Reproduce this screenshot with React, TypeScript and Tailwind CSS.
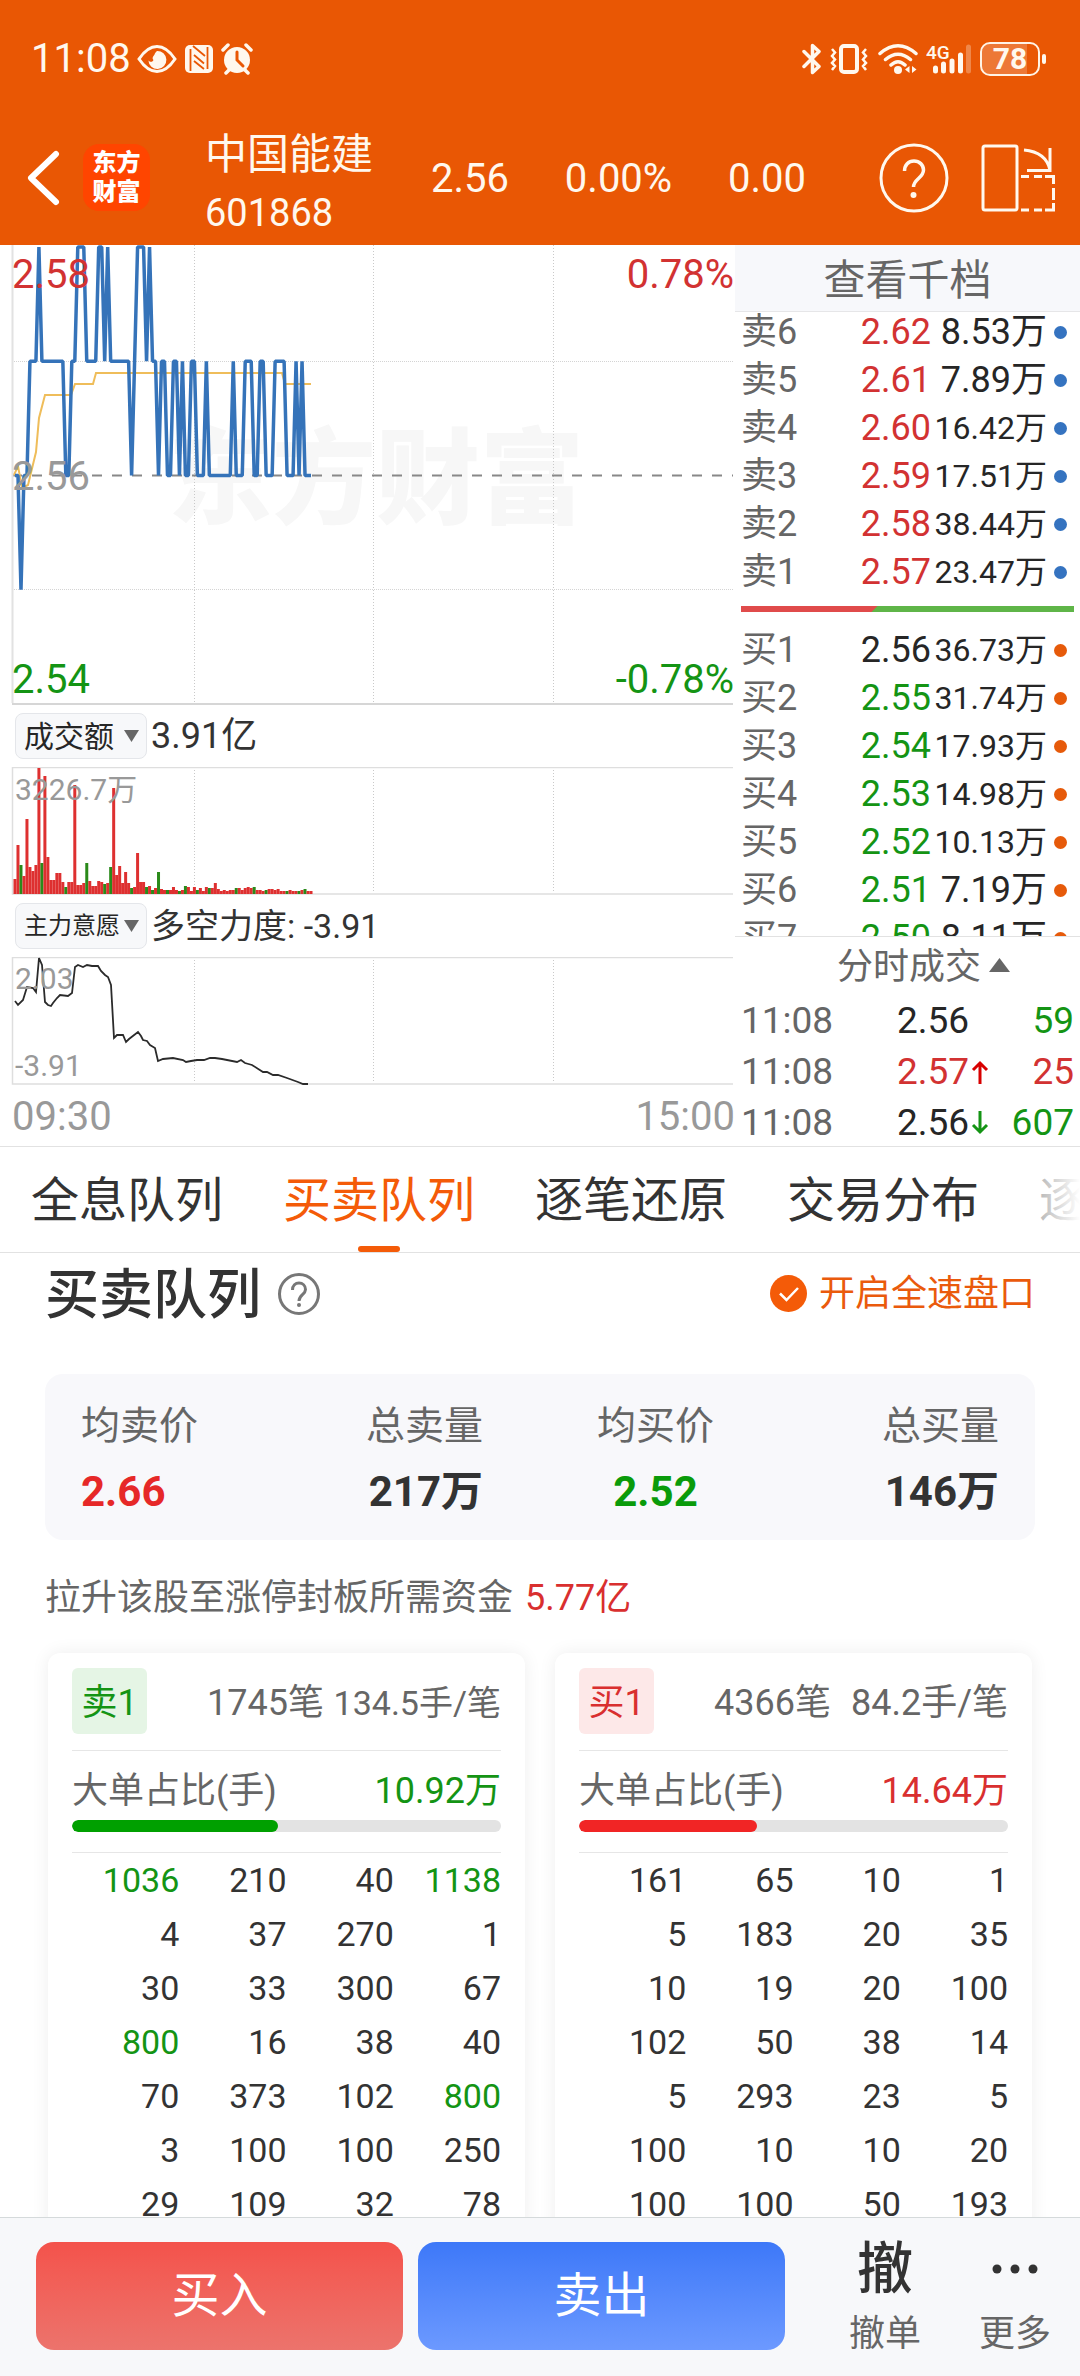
import React from "react";
import clsx from "clsx";

type Tone = "up" | "down" | "flat";

const toneClass: Record<Tone, string> = {
  up: "text-[#d23232]",
  down: "text-[#149414]",
  flat: "text-[#262626]",
};

interface Level {
  label: string;
  price: string;
  volume: string;
  tone: Tone;
}

const SELLS: Level[] = [
  { label: "卖6", price: "2.62", volume: "8.53万", tone: "up" },
  { label: "卖5", price: "2.61", volume: "7.89万", tone: "up" },
  { label: "卖4", price: "2.60", volume: "16.42万", tone: "up" },
  { label: "卖3", price: "2.59", volume: "17.51万", tone: "up" },
  { label: "卖2", price: "2.58", volume: "38.44万", tone: "up" },
  { label: "卖1", price: "2.57", volume: "23.47万", tone: "up" },
];

const BUYS: Level[] = [
  { label: "买1", price: "2.56", volume: "36.73万", tone: "flat" },
  { label: "买2", price: "2.55", volume: "31.74万", tone: "down" },
  { label: "买3", price: "2.54", volume: "17.93万", tone: "down" },
  { label: "买4", price: "2.53", volume: "14.98万", tone: "down" },
  { label: "买5", price: "2.52", volume: "10.13万", tone: "down" },
  { label: "买6", price: "2.51", volume: "7.19万", tone: "down" },
  { label: "买7", price: "2.50", volume: "8.11万", tone: "down" },
];

const TRADES: { time: string; price: string; tone: Tone; dir?: "up" | "down"; qty: string; qtyTone: Tone }[] = [
  { time: "11:08", price: "2.56", tone: "flat", qty: "59", qtyTone: "down" },
  { time: "11:08", price: "2.57", tone: "up", dir: "up", qty: "25", qtyTone: "up" },
  { time: "11:08", price: "2.56", tone: "flat", dir: "down", qty: "607", qtyTone: "down" },
];

// [price, number of minutes it held]
const PRICE_RUNS: [number, number][] = [
  [2.56, 2], [2.55, 1], [2.56, 2], [2.57, 3], [2.58, 1], [2.57, 8], [2.56, 2], [2.57, 2],
  [2.58, 3], [2.57, 4], [2.58, 2], [2.57, 1], [2.58, 1], [2.57, 7], [2.56, 1], [2.57, 1],
  [2.58, 3], [2.57, 1], [2.58, 1], [2.57, 2], [2.56, 1], [2.57, 2], [2.56, 2], [2.57, 2],
  [2.56, 1], [2.57, 1], [2.56, 2], [2.57, 2], [2.56, 3], [2.57, 1], [2.56, 8], [2.57, 1],
  [2.56, 3], [2.57, 3], [2.56, 2], [2.57, 2], [2.56, 3], [2.57, 4], [2.56, 3], [2.57, 1],
  [2.56, 1], [2.57, 1], [2.56, 3],
];

const AVERAGE =
  "14,230 18,221 22,243 28,240 36,207 39,173 45,150 71,150 75,139 93,139 96,128 282,128 285,139 311,139";

// Turnover per minute, negative when the minute closed lower
const TURNOVER = [
  15, 49, -29, 18, 75, 27, 23, 29, 126, -31, 118, 37, 14, 14, 21, 21, 12, -7, 12, 12,
  109, 9, 9, 11, -31, 13, 8, 8, 13, 12, -10, 11, -27, 106, 19, 28, 11, 22, 11, -6,
  7, 41, 12, 12, -7, 8, -4, 6, -22, 5, 4, -4, 4, 7, 4, -3, 4, -8, 7, 3,
  7, -4, 6, 3, 7, -6, 6, 11, 5, 3, 4, 3, 4, 4, -6, 6, 4, 6, 7, 6,
  -7, 4, 4, 3, -4, 5, 5, 4, 5, 3, 3, -3, 4, 3, 3, -3, 4, -5, 3, 3,
];

const FORCE =
  "15,44 18,48 23,43 27,30 33,31 36,35 39,1 42,8 45,45 48,48 51,49 53,46 57,41 60,38 68,39 72,36 75,10 78,8 83,10 87,8 92,9 98,9 101,14 105,18 108,20 111,28 114,81 117,78 123,78 126,85 129,82 138,75 141,79 143,83 147,84 150,88 155,91 158,104 163,102 173,101 183,103 186,105 191,104 197,103 204,103 210,101 215,101 222,102 237,105 241,103 245,106 252,108 263,115 267,115 273,118 278,118 287,121 298,125 303,127 308,127";

const TABS = ["全息队列", "买卖队列", "逐笔还原", "交易分布", "逐"];

interface Queue {
  badge: string;
  side: "sell" | "buy";
  count: string;
  average: string;
  averageClass: string;
  big: string;
  ratio: number;
  rows: number[][];
}

const QUEUES: Queue[] = [
  {
    badge: "卖1",
    side: "sell",
    count: "1745笔",
    average: "134.5手/笔",
    averageClass: "text-[34px]",
    big: "10.92万",
    ratio: 48,
    rows: [
      [1036, 210, 40, 1138],
      [4, 37, 270, 1],
      [30, 33, 300, 67],
      [800, 16, 38, 40],
      [70, 373, 102, 800],
      [3, 100, 100, 250],
      [29, 109, 32, 78],
    ],
  },
  {
    badge: "买1",
    side: "buy",
    count: "4366笔",
    average: "84.2手/笔",
    averageClass: "text-[36px]",
    big: "14.64万",
    ratio: 41.5,
    rows: [
      [161, 65, 10, 1],
      [5, 183, 20, 35],
      [10, 19, 20, 100],
      [102, 50, 38, 14],
      [5, 293, 23, 5],
      [100, 10, 10, 20],
      [100, 100, 50, 193],
    ],
  },
];

const minuteX = (i: number) => 15 + i * 2.99;

const StatusBar: React.FC = () => (
  <div className="flex h-[110px] items-center justify-between pl-[31px] pr-[34px] pt-2">
    <div className="flex items-center">
      <span className="text-[40px] leading-none">11:08</span>
      <svg className="ml-1.5 h-[30px] w-10" viewBox="0 0 40 30" fill="none">
        <path d="M2 15C8 6 14 2.500 20 2.500S32 6 38 15C32 24 26 27.500 20 27.500S8 24 2 15Z" stroke="currentColor" strokeWidth="3" />
        <path d="M20 7a9 9 0 1 1-8.600 9.500c1.800 2.200 4.600 1.500 5-.5-2.200-2.600 1.200-4.500 1.500-6.500Q19 7.500 20 7Z" fill="currentColor" />
      </svg>
      <svg className="ml-2 h-[30px] w-7" viewBox="0 0 28 30">
        <rect x="0" y="1" width="28" height="28" rx="5" fill="currentColor" />
        <path d="M5.500 5v22M22.500 3v22M8 2l12 10M9 11l10 8.500M9 17l10 8" stroke="#e95704" strokeWidth="1.800" fill="none" />
      </svg>
      <svg className="ml-2 h-8 w-8" viewBox="0 0 32 32" fill="none" stroke="currentColor" strokeLinecap="round">
        <circle cx="16" cy="17" r="13" fill="currentColor" stroke="none" />
        <path d="M2 7l5-5M30 7l-5-5M5 30l4-4M27 30l-4-4" strokeWidth="3.500" />
        <path d="M16 9v8l6 6" stroke="#e95704" strokeWidth="3" />
      </svg>
    </div>
    <div className="flex items-center">
      <svg className="h-8 w-5" viewBox="0 0 20 32" fill="none" stroke="currentColor" strokeWidth="3.500" strokeLinejoin="round" strokeLinecap="round">
        <path d="M2 8.500L17 23.500L10.500 29.500V2.500L17 8.500L2 23.500" />
      </svg>
      <svg className="ml-2 h-8 w-[38px]" viewBox="0 0 38 32" fill="none" stroke="currentColor">
        <rect x="11" y="3" width="16" height="26" rx="3" strokeWidth="4" />
        <path d="M2 6l3 3.500-3 3.500 3 3.500-3 3.500 3 3-3 4M36 6l-3 3.500 3 3.500-3 3.500 3 3.500-3 3 3 4" strokeWidth="2.500" />
      </svg>
      <svg className="ml-2.5 h-8 w-10" viewBox="0 0 40 32" fill="none" stroke="currentColor" strokeWidth="3.500" strokeLinecap="round">
        <path d="M2 10.500Q20-5 38 10.500M7.500 16.500Q20 6 32.500 16.500M13 22Q20 15.500 27 22" />
        <circle cx="20" cy="27" r="4" fill="currentColor" stroke="none" />
        <path d="M31.500 23v7l-4.500-3.500zM34 23v7l4.500-3.500z" fill="currentColor" stroke="none" />
      </svg>
      <svg className="ml-2 h-8 w-[46px]" viewBox="0 0 46 32">
        <text x="0" y="16" fontSize="19" fontWeight="500" fill="currentColor">4G</text>
        <g stroke="currentColor" strokeWidth="5" strokeLinecap="round">
          <path d="M9.500 28V25M17.500 28V21M26 28V18M34.500 28V12" />
          <path d="M42.500 28V4" strokeOpacity="0.300" />
        </g>
      </svg>
      <div className="relative ml-2 flex h-[34px] w-[60px] items-center justify-center overflow-hidden rounded-[10px] border-2 border-[#fff3e6]">
        <span className="absolute inset-y-0 left-0 w-4/5 bg-white/20" />
        <span className="relative text-[30px] font-bold leading-none">78</span>
      </div>
      <span className="ml-0.5 h-2.5 w-1 rounded-full bg-current" />
    </div>
  </div>
);

const NavBar: React.FC = () => (
  <div className="flex h-[135px] items-center pl-[26px] pr-6">
    <button type="button" aria-label="返回">
      <svg className="h-14 w-[34px]" viewBox="0 0 34 56" fill="none" stroke="#fff" strokeWidth="6" strokeLinecap="round" strokeLinejoin="round">
        <path d="M30 4L5 28l25 24" />
      </svg>
    </button>
    <div className="ml-[23px] flex size-[67px] flex-col items-center justify-center rounded-2xl bg-[#ff4500] text-2xl font-black leading-[29px] text-white">
      <span>东方</span>
      <span>财富</span>
    </div>
    <div className="ml-[55px] pt-3 leading-[58px]">
      <h1 className="text-[42px] font-normal">中国能建</h1>
      <p className="text-[38px]">601868</p>
    </div>
    <div className="ml-[58px] mr-[73px] flex flex-1 justify-between pt-0.5 text-[40px]">
      <span>2.56</span>
      <span>0.00%</span>
      <span>0.00</span>
    </div>
    <button type="button" aria-label="帮助">
      <svg className="size-[70px]" viewBox="0 0 70 70" fill="none" stroke="currentColor" strokeWidth="3">
        <circle cx="35" cy="35" r="33" />
        <path d="M25.500 28c0-6 4-10 9.500-10s9.500 4 9.500 9c0 8-10 9-10 17" strokeWidth="3.500" />
        <circle cx="34.500" cy="52" r="3" fill="currentColor" stroke="none" />
      </svg>
    </button>
    <button type="button" className="ml-8" aria-label="横屏">
      <svg className="h-[68px] w-[75px]" viewBox="0 0 75 68" fill="none" stroke="currentColor" strokeWidth="3">
        <rect x="2" y="2" width="34" height="64" rx="2" />
        <path d="M43 6Q65 8 69 26M69 4v22.500H46" />
        <path d="M40 32.500h8M53 32.500h8M64 32.500h8.500V40M72.500 44v12M72.500 59v7H64M61 66h-8M48 66h-8" />
      </svg>
    </button>
  </div>
);

// Dotted verticals shared by the three charts
const GridColumns: React.FC<{ height: number }> = ({ height }) => (
  <g stroke="#c9c9c9" strokeDasharray="1 2">
    <path d={`M194.500 0V${height}M373.500 0V${height}M553.500 0V${height}`} />
  </g>
);

const PriceChart: React.FC = () => {
  const prices = PRICE_RUNS.flatMap(([price, n]) => Array<number>(n).fill(price));
  const points = prices.map((p, i) => `${minuteX(i)},${230.5 - (p - 2.56) * 11425}`).join(" ");

  return (
    <svg className="block h-auto w-full" viewBox="0 0 735 460" fontSize="40">
      <text x="168" y="271" fontSize="104" fontWeight="900" fill="#f7f7f7">东方财富</text>
      <GridColumns height={458} />
      <path d="M12 116.500H733M12 344.500H733" stroke="#d4d4d4" strokeDasharray="1 1" />
      <path d="M12 230.500H733" stroke="#888" strokeWidth="2" strokeDasharray="10 10" />
      <path d="M12.500 0V458" stroke="#e2e2e2" strokeWidth="2" />
      <path d="M12 459H733" stroke="#d6d6d6" strokeWidth="2" />
      <polyline points={AVERAGE} fill="none" stroke="#efbd5a" strokeWidth="2" />
      <polyline points={points} fill="none" stroke="#3573b9" strokeWidth="3.500" strokeLinejoin="bevel" />
      <text x="12" y="43" fill="#d23232">2.58</text>
      <text x="12" y="245" fill="#999">2.56</text>
      <text x="12" y="448" fill="#149414">2.54</text>
      <text x="734" y="43" textAnchor="end" fill="#d23232">0.78%</text>
      <text x="734" y="448" textAnchor="end" fill="#149414">-0.78%</text>
    </svg>
  );
};

const TurnoverChart: React.FC = () => (
  <svg className="block h-auto w-full" viewBox="0 0 735 128" fontSize="30">
    <GridColumns height={126} />
    <path d="M733 0.500H12.500V127H733" fill="none" stroke="#dedede" strokeWidth="1.500" />
    {TURNOVER.map((v, i) => (
      <rect
        key={i}
        x={minuteX(i) - 1.5}
        y={127 - Math.abs(v)}
        width="3"
        height={Math.abs(v)}
        fill={v > 0 ? "#de3030" : "#2a8a1a"}
      />
    ))}
    <text x="15" y="33" fill="#999">3226.7万</text>
  </svg>
);

const ForceChart: React.FC = () => (
  <svg className="block h-auto w-full" viewBox="0 0 735 128" fontSize="30">
    <GridColumns height={126} />
    <path d="M733 0.500H12.500V127H733" fill="none" stroke="#dedede" strokeWidth="1.500" />
    <polyline points={FORCE} fill="none" stroke="#2b2b2b" strokeWidth="1.800" />
    <text x="15" y="32" fill="#999">2.03</text>
    <text x="15" y="119" fill="#999">-3.91</text>
  </svg>
);

// Indicator picker with the current reading next to it
const IndicatorRow: React.FC<{ name: string; sizeClass: string; reading: string; readingClass: string }> = ({
  name,
  sizeClass,
  reading,
  readingClass,
}) => (
  <div className="flex h-[62px] items-center gap-1 pl-[15px]">
    <div className="relative">
      <select
        aria-label={name}
        className={`h-[46px] w-[132px] appearance-none rounded-lg border border-[#e4e6ea] bg-[#f7f8fa] pl-2 text-[#262626] ${sizeClass}`}
      >
        <option>{name}</option>
      </select>
      <svg className="pointer-events-none absolute right-2 top-[17px] h-3 w-[15px]" viewBox="0 0 15 12">
        <path d="M0 0h15L7.500 12z" fill="#666" />
      </svg>
    </div>
    <span className={`whitespace-nowrap text-[#333] ${readingClass}`}>{reading}</span>
  </div>
);

const LevelTable: React.FC<{ levels: Level[]; dotClass: string }> = ({ levels, dotClass }) => (
  <table className="w-full table-fixed border-collapse text-[36px] leading-[40px]">
    <tbody>
      {levels.map((l) => (
        <tr key={l.label} className="h-12">
          <td className="p-0 text-[#666]">{l.label}</td>
          <td className={`w-24 p-0 pr-0.5 text-right ${toneClass[l.tone]}`}>{l.price}</td>
          <td
            className={clsx(
              "w-[114px] whitespace-nowrap p-0 text-right text-[#262626]",
              l.volume.length > 5 && "text-[32px]"
            )}
          >
            {l.volume}
          </td>
          <td className="w-[27px] p-0 pl-[7px]">
            <span className={`block size-[13px] rounded-full ${dotClass}`} />
          </td>
        </tr>
      ))}
    </tbody>
  </table>
);

const TradeArrow: React.FC<{ dir: "up" | "down" }> = ({ dir }) => (
  <svg
    className={clsx("ml-0.5 inline-block h-6 w-[18px] align-baseline", dir === "up" ? "text-[#d80000]" : "rotate-180 text-[#149414]")}
    viewBox="0 0 18 24"
    fill="none"
    stroke="currentColor"
    strokeWidth="3"
  >
    <path d="M9 24V3M2 10l7-7 7 7" />
  </svg>
);

const OrderBook: React.FC = () => (
  <aside className="flex flex-col">
    <button type="button" className="h-[67px] border-b border-[#e6e6e8] bg-[#f7f8fb] pt-1.5 text-[42px] leading-none text-[#666]">
      查看千档
    </button>
    <div className="h-0 grow overflow-hidden px-1.5">
      <div className="-mt-1">
        <LevelTable levels={SELLS} dotClass="bg-[#3573c0]" />
        <div className="mb-3.5 mt-2.5 h-1.5 bg-[#5fb548]">
          <div className="h-full w-[41%] bg-[#e04b4b] [clip-path:polygon(0_0,100%_0,calc(100%-6px)_100%,0_100%)]" />
        </div>
        <LevelTable levels={BUYS} dotClass="bg-[#e65a0a]" />
      </div>
    </div>
    <button type="button" className="flex h-[57px] items-center justify-center gap-2 border-t border-[#e2e2e2] pl-8 pt-1 text-[36px] leading-none text-[#666]">
      分时成交
      <svg className="mb-1 h-3.5 w-[21px]" viewBox="0 0 21 14">
        <path d="M10.500 0L21 14H0z" fill="currentColor" />
      </svg>
    </button>
    <table className="mx-1.5 table-fixed border-collapse text-[37px] leading-[47px]">
      <tbody>
        {TRADES.map((t, i) => (
          <tr key={i} className="h-[51px]">
            <td className="w-[156px] p-0 pt-1 text-[#666]">{t.time}</td>
            <td className={`whitespace-nowrap p-0 pt-1 ${toneClass[t.tone]}`}>
              {t.price}
              {t.dir && <TradeArrow dir={t.dir} />}
            </td>
            <td className={`p-0 pt-1 text-right ${toneClass[t.qtyTone]}`}>{t.qty}</td>
          </tr>
        ))}
      </tbody>
    </table>
  </aside>
);

const TabBar: React.FC = () => {
  const [active, setActive] = React.useState(TABS[1]);

  return (
    <nav className="relative flex h-[106px] gap-[60px] overflow-hidden border-b border-[#e2e2e2] pl-[31px]">
      {TABS.map((tab) => (
        <button
          key={tab}
          type="button"
          onClick={() => setActive(tab)}
          className={clsx(
            "relative shrink-0 whitespace-nowrap pt-0.5 text-[48px] leading-none",
            tab === active ? "text-[#f45b08]" : "text-[#333]"
          )}
        >
          {tab}
          {tab === active && (
            <span className="absolute bottom-0 left-1/2 h-1.5 w-[42px] -translate-x-1/2 rounded-full bg-[#f45b08]" />
          )}
        </button>
      ))}
      <span className="absolute inset-y-0 right-0 w-[60px] bg-linear-to-r from-white/50 to-white" />
    </nav>
  );
};

const Stat: React.FC<{ label: string; value: string; valueClass?: string; alignClass?: string }> = ({
  label,
  value,
  valueClass = "text-[#333]",
  alignClass = "",
}) => (
  <div className={`leading-[65px] ${alignClass}`}>
    <p className="text-[39px] text-[#666]">{label}</p>
    <p className={`text-[42px] font-bold ${valueClass}`}>{value}</p>
  </div>
);

const QueueCard: React.FC<{ queue: Queue }> = ({ queue }) => {
  const sell = queue.side === "sell";
  const color = sell ? "text-[#149414]" : "text-[#d92f2f]";

  return (
    <article className="rounded-xl bg-white px-6 pb-4 pt-[15px] shadow-[0_0_18px_rgba(0,0,0,0.07)]">
      <div className="flex items-center border-b border-[#e6e6e6] pb-4 text-right text-[36px] leading-[62px] text-[#666]">
        <span className={clsx("w-[75px] rounded-md pt-1 text-center", color, sell ? "bg-[#e5f5e5]" : "bg-[#fde8e8]")}>
          {queue.badge}
        </span>
        <span className="flex-1 pt-1">{queue.count}</span>
        <span className={`flex-1 whitespace-nowrap pt-1 ${queue.averageClass} leading-[62px]`}>{queue.average}</span>
      </div>
      <div className="flex justify-between pt-3 text-[36px] leading-[56px]">
        <span className="text-[#666]">大单占比(手)</span>
        <span className={color}>{queue.big}</span>
      </div>
      <div className="mt-px h-3 overflow-hidden rounded-full bg-[#e3e3e3]">
        <div
          className={`h-full rounded-full ${sell ? "bg-[#00a000]" : "bg-[#f12525]"}`}
          style={{ width: `${queue.ratio}%` }}
        />
      </div>
      <table className="mt-5 w-full table-fixed border-t border-[#e6e6e6] text-right text-[34px] leading-[54px] text-[#333]">
        <tbody>
          {queue.rows.map((row, r) => (
            <tr key={r}>
              {row.map((n, c) => (
                <td key={c} className={clsx("p-0", n >= 800 && color)}>
                  {n}
                </td>
              ))}
            </tr>
          ))}
        </tbody>
      </table>
    </article>
  );
};

const QueuePanel: React.FC = () => (
  <section>
    <div className="flex h-[81px] items-center px-[45px]">
      <h2 className="pt-1 text-[54px] font-medium leading-none text-[#333]">买卖队列</h2>
      <button type="button" className="ml-4 text-[#777]" aria-label="说明">
        <svg className="size-[44px]" viewBox="0 0 44 44" fill="none" stroke="currentColor" strokeWidth="3">
          <circle cx="22" cy="22" r="19.500" />
          <path d="M15.500 18c0-4.500 3-7 6.500-7s6.500 2.500 6.500 6.500c0 5-6.500 5.500-6.500 11.500" />
          <circle cx="22" cy="33" r="2" fill="currentColor" stroke="none" />
        </svg>
      </button>
      <button type="button" className="ml-auto flex items-center gap-3 text-[36px] leading-none text-[#ea5a0c]">
        <svg className="size-[37px]" viewBox="0 0 37 37" fill="none">
          <circle cx="18.500" cy="18.500" r="18.500" fill="#f45b08" />
          <path d="M10 18.500l6.500 6.500L28 13" stroke="#fff" strokeWidth="2.500" />
        </svg>
        开启全速盘口
      </button>
    </div>
    <div className="mx-[45px] mt-10 grid grid-cols-2 gap-x-[114px] rounded-[18px] bg-[#f8f8fb] px-9 pb-4 pt-5">
      <div className="flex justify-between">
        <Stat label="均卖价" value="2.66" valueClass="text-[#e62828]" />
        <Stat label="总卖量" value="217万" alignClass="text-right" />
      </div>
      <div className="flex justify-between">
        <Stat label="均买价" value="2.52" valueClass="text-[#0a9b0a]" alignClass="text-center" />
        <Stat label="总买量" value="146万" alignClass="text-right" />
      </div>
    </div>
    <p className="px-[45px] pb-[26px] pt-[29px] text-[36px] leading-[58px] text-[#666]">
      拉升该股至涨停封板所需资金
      <span className="ml-3 text-[#d92f2f]">5.77亿</span>
    </p>
    <div className="grid grid-cols-2 gap-[30px] px-12">
      {QUEUES.map((q) => (
        <QueueCard key={q.badge} queue={q} />
      ))}
    </div>
  </section>
);

const ActionBar: React.FC = () => (
  <footer className="fixed inset-x-0 bottom-0 flex items-start border-t border-[#d5dadb] bg-[#f7f8fa] py-6 pl-9 pr-[29px]">
    <div className="flex flex-1 gap-[15px] text-[48px] leading-none text-white">
      <button type="button" className="h-[108px] flex-1 rounded-[18px] bg-linear-to-b from-[#f4524b] to-[#ec736c]">
        买入
      </button>
      <button type="button" className="h-[108px] flex-1 rounded-[18px] bg-linear-to-b from-[#3d78f8] to-[#6c99ff]">
        卖出
      </button>
    </div>
    <button type="button" className="ml-16 flex flex-col items-center text-[#666]">
      <span className="text-[56px] font-medium leading-[54px] text-[#333]">撤</span>
      <span className="mt-5 text-[36px] leading-9">撤单</span>
    </button>
    <button type="button" className="ml-[58px] flex flex-col items-center text-[#666]">
      <svg className="h-[54px] w-12" viewBox="0 0 48 54" fill="#333">
        <circle cx="6" cy="27" r="4.500" />
        <circle cx="24" cy="27" r="4.500" />
        <circle cx="42" cy="27" r="4.500" />
      </svg>
      <span className="mt-5 text-[36px] leading-9">更多</span>
    </button>
  </footer>
);

export default function App() {
  return (
    <div className="min-h-screen bg-white pb-28 font-['Roboto','Noto_Sans_CJK_SC',sans-serif]">
      <header className="bg-[#e95704] text-[#fff8ee]">
        <StatusBar />
        <NavBar />
      </header>
      <main>
        <section className="grid grid-cols-[49fr_23fr] border-b border-[#e2e2e2]">
          <div>
            <PriceChart />
            <IndicatorRow name="成交额" sizeClass="text-[30px]" reading="3.91亿" readingClass="text-[36px]" />
            <TurnoverChart />
            <IndicatorRow name="主力意愿" sizeClass="text-[24px]" reading="多空力度: -3.91" readingClass="text-[34px]" />
            <ForceChart />
            <div className="flex h-[61px] items-center justify-between pl-3 pt-0.5 text-[40px] leading-none text-[#999]">
              <span>09:30</span>
              <span>15:00</span>
            </div>
          </div>
          <OrderBook />
        </section>
        <TabBar />
        <QueuePanel />
      </main>
      <ActionBar />
    </div>
  );
}
